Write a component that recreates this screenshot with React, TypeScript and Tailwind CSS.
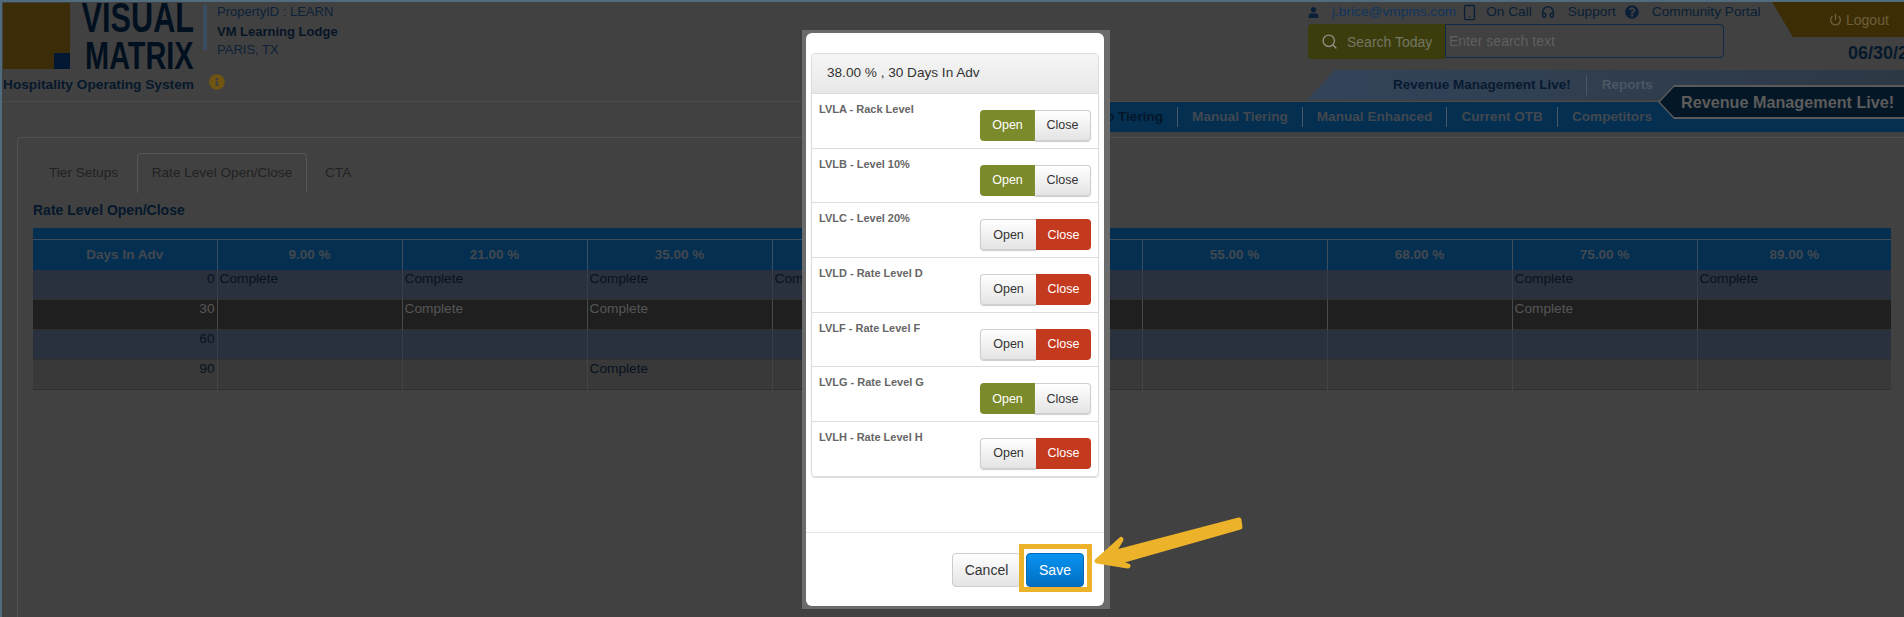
import { Headphones, Power, Search, Smartphone } from 'lucide-react';
import { FaInfoCircle, FaQuestionCircle, FaUser } from 'react-icons/fa';

const sans = "font-['Liberation_Sans',Arial,sans-serif]";

const columns = ['9.00 %', '21.00 %', '35.00 %', '38.00 %', '45.00 %', '55.00 %', '68.00 %', '75.00 %', '89.00 %'];

const rows = [
  { days: 0, done: [0, 1, 2, 3, 7, 8], row: 'h-[29px] bg-[#28313d] text-[#07121f]', cell: 'border-[#353e49]' },
  { days: 30, done: [1, 2, 7], row: 'h-[30px] bg-[#1f1f1f] text-[#565656]', cell: 'border-[#4a4a4a]' },
  { days: 60, done: [], row: 'h-[30px] bg-[#28313d] text-[#07121f]', cell: 'border-[#353e49]' },
  { days: 90, done: [2], row: 'h-[30px] bg-[#393939] text-[#07121f]', cell: 'border-[#444444]' },
];

const levels = [
  { label: 'LVLA - Rack Level', open: true },
  { label: 'LVLB - Level 10%', open: true },
  { label: 'LVLC - Level 20%', open: false },
  { label: 'LVLD - Rate Level D', open: false },
  { label: 'LVLF - Rate Level F', open: false },
  { label: 'LVLG - Rate Level G', open: true },
  { label: 'LVLH - Rate Level H', open: false },
];

const navItems = ['Auto Tiering', 'Manual Tiering', 'Manual Enhanced', 'Current OTB', 'Competitors'];

function Toggle({ open }: { open: boolean }) {
  const idle = 'bg-gradient-to-b from-white to-[#e4e4e4] text-[#333] border border-[#cfcfcf] shadow-[0_1px_1px_#ccc]';
  return (
    <div className="flex h-[31px] w-[111px] text-[12.5px]">
      <button
        className={`flex-1 rounded-l ${open ? 'bg-[#7b8a2a] text-white' : idle + ' border-r-0'}`}
      >
        Open
      </button>
      <button
        className={`flex-1 rounded-r ${open ? idle + ' border-l-0' : 'bg-[#c43a1f] text-white'}`}
      >
        Close
      </button>
    </div>
  );
}

function Modal() {
  return (
    <div className="absolute left-[800px] top-[28px] h-[579px] w-[308px] bg-[#6b6b6b] pb-[3px] pl-1 pr-1.5 pt-[3px]">
      <div className="flex h-full flex-col rounded-md bg-white">
        <div className="mx-[5px] mt-5 rounded border border-[#dddddd] shadow-[0_1px_1px_#ddd]">
          <div className="flex h-[39px] items-center rounded-t bg-gradient-to-b from-[#f5f5f5] to-[#e8e8e8] pl-[15px] text-[13.6px] text-[#333]">
            38.00 % , 30 Days In Adv
          </div>
          {levels.map((level) => (
            <div key={level.label} className="flex h-[54.7px] justify-between border-t border-[#dddddd] pl-[7px] pr-[7px] pt-[7px]">
              <span className="text-[11px] font-bold leading-[16px] text-[#666]">{level.label}</span>
              <div className="pt-[9px]">
                <Toggle open={level.open} />
              </div>
            </div>
          ))}
        </div>
        <div className="mt-auto flex h-[74px] items-start justify-end gap-[5px] border-t border-[#e5e5e5] pr-5 pt-5 text-sm">
          <button className="h-[34px] w-[69px] rounded border border-[#cccccc] bg-gradient-to-b from-white to-[#e4e4e4] text-[#333]">
            Cancel
          </button>
          <button className="h-[34px] w-[58px] rounded border border-[#0068b4] bg-gradient-to-b from-[#0a93f2] to-[#006fc2] font-medium text-white">
            Save
          </button>
        </div>
      </div>
    </div>
  );
}

function Callout() {
  return (
    <>
      <div className="absolute left-[1017px] top-[542px] h-[48px] w-[73px] border-[5px] border-[#ecb22a]" />
      <svg className="absolute left-[1083px] top-[508px]" width="170" height="70" viewBox="1085 510 170 70" fill="#ecb22a">
        <path
          d="M1097 561 L1121 539.5 L1113 553 L1239 520 L1240 527 L1117 562 L1128 566 Z"
          stroke="#ecb22a"
          strokeWidth="5"
          strokeLinejoin="round"
        />
      </svg>
    </>
  );
}

export default function App() {
  return (
    <div className={`relative h-[617px] w-full overflow-hidden border-l-2 border-t-2 border-[#506b7b] bg-[#414141] ${sans}`}>
      <header className="flex h-[100px] justify-between border-b border-[#4b4b4b]">
        <div className="flex pl-px pt-px">
          <div className="w-[192px]">
            <div className="flex h-[66px]">
              <div className="flex h-[66px] w-[67px] items-end justify-end bg-[#3c2d08]">
                <div className="h-4 w-4 bg-[#021832]" />
              </div>
              <div className="ml-3 flex h-[66px] w-[112px] flex-col items-end overflow-hidden whitespace-nowrap font-bold text-[#01101f]">
                <span className="-mt-[6.5px] origin-right scale-x-[0.73] text-[42px] leading-[42px]">VISUAL</span>
                <span className="-mt-[2.5px] origin-right scale-x-[0.74] text-[39px] leading-[39px]">MATRIX</span>
              </div>
            </div>
            <div className="mt-[7px] whitespace-nowrap text-[13.7px] font-bold leading-[18px] text-[#06182b]">
              Hospitality Operating System
            </div>
          </div>
          <div className="ml-[8px] mt-[2px] h-[45px] w-1 bg-[#3c4c64]" />
          <div className="ml-[10px] flex flex-col text-[13px] leading-[18px] text-[#0d2238]">
            <span>PropertyID : LEARN</span>
            <span className="mt-[2px] font-bold text-[#061526]">VM Learning Lodge</span>
            <span>PARIS, TX</span>
            <FaInfoCircle className="-ml-[8px] mt-[15px] text-[16px] text-[#6f5510]" />
          </div>
        </div>

        <div className="flex w-[597px] flex-col">
          <div className="flex h-[68px]">
            <div className="w-[465px]">
              <div className="flex h-[20px] items-center whitespace-nowrap text-[13.7px] text-[#0a1f36]">
                <FaUser className="ml-[1px] text-[11px] text-[#0b2038]" />
                <span className="ml-[13px] text-[#0f3560]">j.brice@vmpms.com</span>
                <Smartphone size={17} strokeWidth={2} className="ml-[5px] text-[#0b2038]" />
                <span className="ml-[8px]">On Call</span>
                <Headphones size={14} strokeWidth={2.5} className="ml-[9px] text-[#0b2038]" />
                <span className="ml-[13px]">Support</span>
                <FaQuestionCircle className="ml-[9px] text-[14px] text-[#0b2038]" />
                <span className="ml-[13px]">Community Portal</span>
              </div>
              <div className="ml-px mt-[2px] flex h-[35px] w-[416px] text-sm">
                <div className="flex w-[137px] items-center rounded-l bg-[#3b3e0c] pl-[13px] text-[#757565]">
                  <Search size={17} strokeWidth={2} className="text-[#8d8d82]" />
                  <span className="ml-[9px] whitespace-nowrap">Search Today</span>
                </div>
                <input
                  readOnly
                  placeholder="Enter search text"
                  className="h-[34px] flex-1 rounded-r border border-[#0f2a47] bg-transparent pl-[3px] text-sm outline-none placeholder:text-[#5f5f5f]"
                />
              </div>
            </div>
            <div className="w-[132px]">
              <div className="flex h-[35px] items-center bg-[#3d2d05] pl-[57px] text-sm text-[#6c5f3c] [clip-path:polygon(0_0,100%_0,100%_100%,21px_100%)]">
                <Power size={13} strokeWidth={2.5} />
                <span className="ml-[4px]">Logout</span>
              </div>
              <div className="mt-[4px] whitespace-nowrap pl-[76px] text-[18px] font-bold leading-[24px] text-[#06182b]">
                06/30/2021
              </div>
            </div>
          </div>
          <div className="flex h-[30px] items-center bg-gradient-to-r from-[#33445a] to-[#2d3845] pl-[86px] text-[13.5px] font-bold [clip-path:polygon(28px_0,100%_0,100%_100%,0_100%)]">
            <span className="text-[#081a30]">Revenue Management Live!</span>
            <span className="ml-[15px] h-5 w-px bg-[#4a5562]" />
            <span className="ml-[15px] text-[#4a5662]">Reports</span>
          </div>
        </div>
      </header>

      <nav className="ml-auto flex h-[30px] w-[1100px] items-center justify-end bg-[#052f50] pr-[252px] text-[13.6px] font-bold text-[#42484f]">
        {navItems.map((item, i) => (
          <div key={item} className="flex items-center">
            {i > 0 && <span className="mx-[14px] h-5 w-px bg-[#4c5a68]" />}
            <span className={i === 0 ? 'text-[#03162a]' : ''}>{item}</span>
          </div>
        ))}
      </nav>

      <div className="absolute right-0 top-[83px] h-[34px] w-[246px] bg-[#5a5a5a] [clip-path:polygon(16px_0,100%_0,100%_100%,16px_100%,0_50%)]">
        <div className="mt-[2px] flex h-[30px] items-center whitespace-nowrap bg-[#041727] pl-[23px] text-[16.2px] font-bold text-[#5c5c5c] [clip-path:polygon(16px_0,100%_0,100%_100%,16px_100%,2px_50%)]">
          Revenue Management Live!
          <span className="ml-[10px] h-full w-px bg-[#5a5a5a]" />
        </div>
      </div>

      <main className="ml-[15px] mt-[5px] h-[480px] rounded-tl border-l border-t border-[#505050] pl-[15px] pt-[15px]">
        <div className="flex h-10 items-stretch pl-[16px] text-[13.6px] text-[#222]">
          <span className="flex items-center">Tier Setups</span>
          <span className="ml-[19px] flex w-[170px] items-center justify-center rounded-t border border-b-0 border-[#565656]">
            Rate Level Open/Close
          </span>
          <span className="ml-[18px] flex items-center">CTA</span>
        </div>
        <h2 className="mt-[8px] text-[14px] font-bold leading-[18px] text-[#05182c]">Rate Level Open/Close</h2>
        <table className="mt-[9px] w-[1858px] table-fixed border-collapse text-[13.7px]">
          <colgroup>
            <col className="w-[184px]" />
            {columns.map((c, i) => (
              <col key={c} className={i < 8 ? 'w-[185px]' : ''} />
            ))}
          </colgroup>
          <thead className="bg-[#052f50] text-[13.5px] font-bold text-[#42484f]">
            <tr className="h-[11px]">
              <th colSpan={10} className="border-b border-[#3d4d5c]" />
            </tr>
            <tr className="h-[31px]">
              <th className="text-center font-bold">Days In Adv</th>
              {columns.map((c) => (
                <th key={c} className="border-l border-[#3d4d5c] text-center font-bold">
                  {c}
                </th>
              ))}
            </tr>
          </thead>
          <tbody>
            {rows.map((r) => (
              <tr key={r.days} className={`border-b border-[#2f2f2f] ${r.row}`}>
                <td className="pr-[2px] text-right align-top leading-[18px]">{r.days}</td>
                {columns.map((c, i) => (
                  <td key={c} className={`border-l pl-[2px] align-top leading-[18px] ${r.cell}`}>
                    {r.done.includes(i) ? 'Complete' : ''}
                  </td>
                ))}
              </tr>
            ))}
          </tbody>
        </table>
      </main>

      <Modal />
      <Callout />
    </div>
  );
}
